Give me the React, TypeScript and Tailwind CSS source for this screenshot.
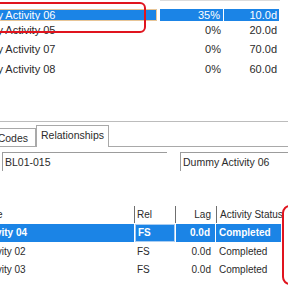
import React from "react";

const BLUE = "bg-[#1b84e6]";

function TopRow({ name, pct, dur, selected, h }: { name: string; pct: string; dur: string; selected?: boolean; h: string }) {
  return (
    <div className={`flex ${h} items-center`}>
      <div
        className={`w-[157px] h-full flex items-center overflow-hidden ${selected ? `${BLUE} text-white border-y border-r border-[#e7c597]` : "text-[#2b2b2b]"}`}
      >
        <span className="ml-[-35px] whitespace-nowrap">{name}</span>
      </div>
      <div className="w-[3px]" />
      <div className={`w-[64px] h-full flex items-center justify-end pr-[3px] ${selected ? `${BLUE} text-white border-r border-white` : "text-[#2b2b2b]"}`}>
        {pct}
      </div>
      <div className={`w-[55px] h-full flex items-center justify-end pr-[2px] ${selected ? `${BLUE} text-white` : "text-[#2b2b2b]"}`}>
        {dur}
      </div>
    </div>
  );
}

function BottomRow({ name, selected, h }: { name: string; selected?: boolean; h: string }) {
  const txt = selected ? "text-white font-bold" : "text-[#2b2b2b]";
  return (
    <div className={`flex ${h} items-center ${txt}`}>
      <div className={`w-[134px] h-full flex items-center overflow-hidden ${selected ? BLUE : ""}`}>
        <span className={`${selected ? "ml-[-23px]" : "ml-[-20px]"} whitespace-nowrap`}>{name}</span>
      </div>
      <div className="w-[1px]" />
      <div className={`w-[40px] h-full flex items-center pl-[2px] ${selected ? `${BLUE} border border-[#a9cdf2]` : ""}`}>FS</div>
      <div className="w-[1px]" />
      <div className={`w-[40px] h-full flex items-center justify-end pr-[5px] ${selected ? `${BLUE} border-r border-white` : ""}`}>0.0d</div>
      <div className={`w-[65px] h-full flex items-center pl-[3px] ${selected ? BLUE : ""}`}>Completed</div>
    </div>
  );
}

export default function App() {
  return (
    <div
      className="w-[288px] h-[288px] relative overflow-hidden bg-white text-[#2b2b2b]"
      style={{ fontFamily: '"Liberation Sans", Arial, sans-serif' }}
    >
      {/* top grid */}
      <div className="text-[11px] leading-none">
        <div className="h-[9px] flex">
          <div className="w-[160px]" />
          <div className="w-[120px] h-[1px] bg-[#dcdcdc]" />
        </div>
        <TopRow name="Dummy Activity 06" pct="35%" dur="10.0d" selected h="h-[12px]" />
        <TopRow name="Dummy Activity 05" pct="0%" dur="20.0d" h="h-[18px]" />
        <TopRow name="Dummy Activity 07" pct="0%" dur="70.0d" h="h-[20px]" />
        <TopRow name="Dummy Activity 08" pct="0%" dur="60.0d" h="h-[20px]" />
      </div>

      <div className="h-[42px]" />
      <div className="h-[1px] bg-[#bcbcbc]" />

      {/* tabs */}
      <div className="h-[25px] flex items-end text-[10.5px] leading-none relative">
        <div className="absolute left-0 right-0 bottom-0 h-[1px] bg-[#a9a9a9]" />
        <div className="w-[36px] h-[19px] border-t border-r border-[#a9a9a9] flex items-center justify-end pr-[7px] overflow-hidden relative">
          <span className="whitespace-nowrap">Codes</span>
        </div>
        <div className="w-[73px] h-[22px] border-t border-x border-[#a9a9a9] bg-white flex items-center justify-center pb-[3px] relative z-10">
          <span className="whitespace-nowrap">Relationships</span>
        </div>
      </div>

      <div className="h-[5px]" />

      {/* fields */}
      <div className="flex h-[19px] text-[10.5px] leading-none">
        <div className="w-[2px]" />
        <div className="w-[165px] h-full border-t border-l border-[#9c9c9c] flex items-center pl-[2px]">BL01-015</div>
        <div className="w-[13px]" />
        <div className="flex-1 h-full border-t border-l border-[#9c9c9c] flex items-center pl-[2px] whitespace-nowrap">
          Dummy Activity 06
        </div>
      </div>

      <div className="h-[34px]" />

      {/* bottom table */}
      <div className="text-[10px] leading-none">
        <div className="flex h-[19px] items-center">
          <div className="w-[134px] h-full flex items-center overflow-hidden">
            <span className="ml-[-24px]">Name</span>
          </div>
          <div className="w-[1px] h-[17px] bg-[#6f6f6f]" />
          <div className="w-[40px] h-full flex items-center pl-[2px]">Rel</div>
          <div className="w-[1px] h-[17px] bg-[#6f6f6f]" />
          <div className="w-[40px] h-full flex items-center justify-end pr-[5px]">Lag</div>
          <div className="w-[1px] h-[17px] bg-[#6f6f6f]" />
          <div className="flex-1 h-full flex items-center pl-[3px] whitespace-nowrap overflow-hidden">Activity Status</div>
        </div>
        <BottomRow name="Activity 04" selected h="h-[18px]" />
        <BottomRow name="Activity 02" h="h-[19px]" />
        <BottomRow name="Activity 03" h="h-[18px]" />
      </div>

      {/* red annotations */}
      <div className="absolute left-[-12px] top-[2px] w-[158px] h-[31px] border-2 border-[#e0141e] rounded-[6px]" />
      <div className="absolute left-[282px] top-[205px] w-[30px] h-[80px] border-2 border-[#e0141e] rounded-[8px]" />
    </div>
  );
}
